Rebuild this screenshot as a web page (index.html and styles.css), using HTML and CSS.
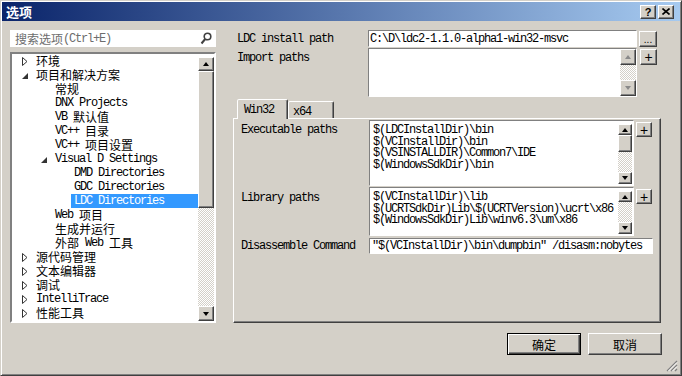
FILE: index.html
```html
<!DOCTYPE html>
<html lang="zh-CN">
<head>
  <meta charset="UTF-8">
  <title>选项</title>
  <link rel="stylesheet" href="styles.css">
</head>
<body>
  <div class="dialog">
    <!-- Title bar -->
    <div class="titlebar">
      <span class="title zh">选项</span>
      <div class="caption-btns">
        <span class="cap-btn help">?</span>
        <span class="cap-btn">
          <svg width="8" height="7" viewBox="0 0 8 7"><path d="M0.5 0.5 L7.5 6.5 M7.5 0.5 L0.5 6.5" stroke="#000" stroke-width="1.6"/></svg>
        </span>
      </div>
    </div>

    <div class="content">
      <!-- Left: search + tree -->
      <div class="left">
        <div class="search">
          <span class="zh">搜索选项</span><span>(Ctrl+E)</span>
          <svg class="search-icon" width="12" height="13" viewBox="0 0 12 13"><circle cx="7.5" cy="4.5" r="3.3" fill="none" stroke="#404040" stroke-width="1.6"/><path d="M5.2 7 L1.5 11.5" stroke="#404040" stroke-width="2"/></svg>
        </div>
        <div class="tree">
          <div class="tree-rows">
            <div class="row l0"><span class="tw"><svg width="6" height="9"><path d="M0.5 0.5 L5 4.5 L0.5 8.5 Z" fill="none" stroke="#333"/></svg></span><span class="txt"><span class="zh">环境</span></span></div>
            <div class="row l0"><span class="tw exp"><svg width="6" height="6"><path d="M6 0 L6 6 L0 6 Z" fill="#333"/></svg></span><span class="txt"><span class="zh">项目和解决方案</span></span></div>
            <div class="row l1"><span class="tw"></span><span class="txt"><span class="zh">常规</span></span></div>
            <div class="row l1"><span class="tw"></span><span class="txt">DNX Projects</span></div>
            <div class="row l1"><span class="tw"></span><span class="txt">VB <span class="zh">默认值</span></span></div>
            <div class="row l1"><span class="tw"></span><span class="txt">VC++ <span class="zh">目录</span></span></div>
            <div class="row l1"><span class="tw"></span><span class="txt">VC++ <span class="zh">项目设置</span></span></div>
            <div class="row l1"><span class="tw exp"><svg width="6" height="6"><path d="M6 0 L6 6 L0 6 Z" fill="#333"/></svg></span><span class="txt">Visual D Settings</span></div>
            <div class="row l2"><span class="tw"></span><span class="txt">DMD Directories</span></div>
            <div class="row l2"><span class="tw"></span><span class="txt">GDC Directories</span></div>
            <div class="row l2 sel"><span class="tw"></span><span class="txt">LDC Directories</span></div>
            <div class="row l1"><span class="tw"></span><span class="txt">Web <span class="zh">项目</span></span></div>
            <div class="row l1"><span class="tw"></span><span class="txt"><span class="zh">生成并运行</span></span></div>
            <div class="row l1"><span class="tw"></span><span class="txt"><span class="zh">外部</span> Web <span class="zh">工具</span></span></div>
            <div class="row l0"><span class="tw"><svg width="6" height="9"><path d="M0.5 0.5 L5 4.5 L0.5 8.5 Z" fill="none" stroke="#333"/></svg></span><span class="txt"><span class="zh">源代码管理</span></span></div>
            <div class="row l0"><span class="tw"><svg width="6" height="9"><path d="M0.5 0.5 L5 4.5 L0.5 8.5 Z" fill="none" stroke="#333"/></svg></span><span class="txt"><span class="zh">文本编辑器</span></span></div>
            <div class="row l0"><span class="tw"><svg width="6" height="9"><path d="M0.5 0.5 L5 4.5 L0.5 8.5 Z" fill="none" stroke="#333"/></svg></span><span class="txt"><span class="zh">调试</span></span></div>
            <div class="row l0"><span class="tw"><svg width="6" height="9"><path d="M0.5 0.5 L5 4.5 L0.5 8.5 Z" fill="none" stroke="#333"/></svg></span><span class="txt">IntelliTrace</span></div>
            <div class="row l0"><span class="tw"><svg width="6" height="9"><path d="M0.5 0.5 L5 4.5 L0.5 8.5 Z" fill="none" stroke="#333"/></svg></span><span class="txt"><span class="zh">性能工具</span></span></div>
          </div>
          <div class="vscroll tree-scroll">
            <span class="sb-btn sb-up"></span>
            <span class="sb-thumb"></span>
            <span class="sb-track"></span>
            <span class="sb-btn sb-down"></span>
          </div>
        </div>
      </div>

      <!-- Right: settings page -->
      <div class="right">
        <div class="field-row first">
          <span class="lbl">LDC install path</span>
          <div class="input path">C:\D\ldc2-1.1.0-alpha1-win32-msvc</div>
          <span class="btn-small dots">...</span>
        </div>
        <div class="field-row second">
          <span class="lbl">Import paths</span>
          <div class="textarea">
            <div class="list-text"></div>
            <div class="vscroll import-scroll">
              <span class="sb-btn sb-up off"></span>
              <span class="sb-track"></span>
              <span class="sb-btn sb-down off"></span>
            </div>
          </div>
          <span class="btn-small plus">+</span>
        </div>

        <div class="tabs">
          <span class="tab active">Win32</span>
          <span class="tab">x64</span>
        </div>
        <div class="panel">
          <div class="prow exec">
            <span class="lbl">Executable paths</span>
            <div class="list">
              <div class="list-text">
                <div class="line">$(LDCInstallDir)\bin</div>
                <div class="line">$(VCInstallDir)\bin</div>
                <div class="line">$(VSINSTALLDIR)\Common7\IDE</div>
                <div class="line">$(WindowsSdkDir)\bin</div>
              </div>
              <div class="vscroll list-scroll">
                <span class="sb-btn sb-up"></span>
                <span class="sb-thumb"></span>
                <span class="sb-track"></span>
                <span class="sb-btn sb-down"></span>
              </div>
            </div>
            <span class="btn-small add">+</span>
          </div>
          <div class="prow lib">
            <span class="lbl">Library paths</span>
            <div class="list">
              <div class="list-text">
                <div class="line">$(VCInstallDir)\lib</div>
                <div class="line">$(UCRTSdkDir)Lib\$(UCRTVersion)\ucrt\x86</div>
                <div class="line">$(WindowsSdkDir)Lib\winv6.3\um\x86</div>
              </div>
              <div class="vscroll list-scroll">
                <span class="sb-btn sb-up"></span>
                <span class="sb-track"></span>
                <span class="sb-btn sb-down"></span>
              </div>
            </div>
            <span class="btn-small add">+</span>
          </div>
          <div class="prow dis">
            <span class="lbl">Disassemble Command</span>
            <div class="input wide">"$(VCInstallDir)\bin\dumpbin" /disasm:nobytes</div>
          </div>
        </div>

        <div class="buttons">
          <span class="btn default zh">确定</span>
          <span class="btn zh">取消</span>
        </div>
      </div>
    </div>

    <svg class="grip" width="12" height="12" viewBox="0 0 12 12">
      <path d="M11 1 L1 11 M11 5 L5 11 M11 9 L9 11" stroke="#808080" stroke-width="1.2"/>
      <path d="M11 2.5 L2.5 11 M11 6.5 L6.5 11" stroke="#fff" stroke-width="1"/>
    </svg>
  </div>
</body>
</html>
```

FILE: styles.css
```css
/* Base */
* {
  margin: 0;
  padding: 0;
  box-sizing: border-box;
}

body {
  width: 682px;
  height: 376px;
  overflow: hidden;
  font-family: "Liberation Mono", "Noto Sans CJK SC", monospace;
  font-size: 12px;
  letter-spacing: -1.2px;
  color: #000;
  background: #d4d0c8;
}

.zh {
  font-family: "Noto Sans CJK SC", sans-serif;
  letter-spacing: 0;
}

/* Window frame */
.dialog {
  position: relative;
  width: 682px;
  height: 376px;
  border: 1px solid;
  border-color: #d4d0c8 #404040 #404040 #d4d0c8;
  box-shadow: inset 1px 1px #fff, inset -1px -1px #808080;
  padding: 1px;
  background: #d4d0c8;
}

.titlebar {
  height: 19px;
  display: flex;
  align-items: center;
  padding-left: 4px;
  background: linear-gradient(to right, #0a246a, #a6caf0);
}

.title {
  color: #fff;
  font-weight: bold;
  font-size: 13px;
  line-height: 19px;
}

.caption-btns {
  margin-left: auto;
  margin-right: 6px;
  display: flex;
  gap: 2px;
}

.cap-btn {
  width: 16px;
  height: 14px;
  display: flex;
  align-items: center;
  justify-content: center;
  background: #d4d0c8;
  border: 1px solid;
  border-color: #fff #404040 #404040 #fff;
  box-shadow: inset -1px -1px #808080;
}

.cap-btn.help {
  font: bold 11px "Liberation Sans", sans-serif;
  letter-spacing: 0;
}

/* Shared 3D bits */
.sb-btn,
.sb-thumb,
.btn-small,
.btn {
  background: #d4d0c8;
  border: 1px solid;
  border-color: #fff #404040 #404040 #fff;
  box-shadow: inset -1px -1px #808080;
}

.sb-btn {
  display: flex;
  align-items: center;
  justify-content: center;
  flex: none;
}

.sb-up::after,
.sb-down::after {
  content: '';
  border-left: 3px solid transparent;
  border-right: 3px solid transparent;
}

.sb-up::after {
  border-bottom: 4px solid #000;
}

.sb-down::after {
  border-top: 4px solid #000;
}

.sb-up.off::after {
  border-bottom-color: #8a8a8a;
}

.sb-down.off::after {
  border-top-color: #8a8a8a;
}

.sb-track {
  flex: 1;
  background: repeating-conic-gradient(#d4d0c8 0 25%, #fff 0 50%) 0 0 / 2px 2px;
}

.vscroll {
  display: flex;
  flex-direction: column;
  flex: none;
}

/* Layout */
.content {
  display: flex;
  padding: 9px 0 0 8px;
}

.left {
  width: 206px;
}

.search {
  height: 17px;
  background: #fff;
  display: flex;
  align-items: center;
  padding: 0 4px 0 5px;
  color: #6d6d6d;
  line-height: 14px;
}

.search-icon {
  margin-left: auto;
}

/* Tree */
.tree {
  margin-top: 5px;
  height: 271px;
  display: flex;
  background: #fff;
  border: 2px solid;
  border-color: #808080 #fff #fff #808080;
}

.tree-rows {
  flex: 1;
}

.row {
  height: 14px;
  display: flex;
  align-items: center;
  white-space: nowrap;
}

.row.l0 { padding-left: 8px; }
.row.l1 { padding-left: 27px; }
.row.l2 { padding-left: 46px; }

.tw {
  width: 16px;
  height: 14px;
  flex: none;
  display: flex;
  align-items: center;
  padding-left: 2px;
}

.tw.exp {
  padding-top: 2px;
}

.txt {
  height: 14px;
  line-height: 15px;
}

.txt .zh {
  display: inline-block;
  vertical-align: top;
  height: 14px;
  line-height: 14px;
}

.row.sel .txt {
  flex: 1;
  margin-left: -3px;
  padding-left: 3px;
  background: #3399ff;
  color: #fff;
}

.tree-scroll {
  width: 16px;
  margin-top: 3px;
}

.tree-scroll .sb-up { height: 14px; }
.tree-scroll .sb-thumb { height: 137px; flex: none; }
.tree-scroll .sb-down { height: 15px; }

/* Right side */
.right {
  width: 429px;
  margin-left: 17px;
}

.field-row {
  display: flex;
  align-items: flex-start;
}

.field-row .lbl {
  width: 135px;
  padding-left: 4px;
  line-height: 12px;
  white-space: nowrap;
}

.field-row.first .lbl { padding-top: 3px; }

.field-row.second {
  margin-top: 1px;
}

.field-row.second .lbl { padding-top: 4px; }

.input {
  height: 17px;
  background: #fff;
  border: 1px solid;
  border-color: #808080 #fff #fff #808080;
  padding: 2px 0 0 1px;
  line-height: 12px;
  white-space: nowrap;
  overflow: hidden;
}

.input.path {
  width: 269px;
}

.btn-small {
  display: flex;
  align-items: center;
  justify-content: center;
  letter-spacing: 0;
  font-family: "Liberation Sans", sans-serif;
}

.btn-small.dots {
  width: 18px;
  height: 16px;
  margin: 1px 0 0 2px;
  align-items: flex-end;
  font-size: 10px;
  line-height: 10px;
  padding-bottom: 1px;
}

.btn-small.plus {
  width: 17px;
  height: 16px;
  margin: 1px 0 0 3px;
  font-size: 14px;
}

.textarea {
  width: 269px;
  height: 49px;
  background: #fff;
  display: flex;
  border: 1px solid;
  border-color: #808080 #fff #fff #808080;
}

.import-scroll {
  width: 16px;
}

.import-scroll .sb-btn {
  height: 16px;
}

/* Tabs */
.tabs {
  position: relative;
  z-index: 1;
  display: flex;
  align-items: flex-end;
  height: 19px;
  margin-top: 2px;
  padding-left: 4px;
}

.tab {
  height: 17px;
  padding: 4px 0 0 4px;
  line-height: 12px;
  border: 1px solid;
  border-bottom: none;
  border-color: #fff #404040 transparent #fff;
  border-radius: 2px 2px 0 0;
  box-shadow: inset -1px 0 #808080;
  background: #d4d0c8;
  width: 46px;
}

.tab.active {
  width: 51px;
  height: 20px;
  margin-bottom: -1px;
  padding-left: 6px;
}

.panel {
  width: 428px;
  height: 205px;
  border: 1px solid;
  border-color: #fff #404040 #404040 #fff;
  box-shadow: inset -1px -1px #808080;
  padding: 1px 0 0 7px;
}

.prow {
  display: flex;
  align-items: flex-start;
}

.prow .lbl {
  width: 128px;
  line-height: 12px;
  white-space: nowrap;
}

.prow.exec .lbl { padding-top: 4px; }

.prow.lib {
  margin-top: 1px;
}

.prow.lib .lbl { padding-top: 5px; }

.prow.dis {
  margin-top: 2px;
}

.prow.dis .lbl { padding-top: 2px; }

.list {
  width: 265px;
  background: #fff;
  display: flex;
  border: 1px solid;
  border-color: #808080 #fff #fff #808080;
}

.prow.exec .list { height: 66px; }
.prow.lib .list { height: 49px; }

.list-text {
  flex: 1;
  padding: 3px 0 0 3px;
  white-space: nowrap;
  overflow: hidden;
}

.line {
  height: 11.7px;
  line-height: 12px;
}

.list-scroll {
  width: 14px;
  margin: 3px 1px 1px 0;
}

.list-scroll .sb-up { height: 11px; }
.list-scroll .sb-thumb { height: 17px; flex: none; }
.list-scroll .sb-down { height: 12px; }

.btn-small.add {
  width: 16px;
  height: 15px;
  margin: 2px 0 0 2px;
  font-size: 14px;
}

.input.wide {
  width: 284px;
  height: 16px;
  padding-top: 1px;
  padding-left: 2px;
}

/* Dialog buttons */
.buttons {
  display: flex;
  justify-content: flex-end;
  gap: 7px;
  margin-top: 10px;
}

.btn {
  width: 74px;
  height: 22px;
  display: flex;
  align-items: center;
  justify-content: center;
  font-size: 12px;
}

.btn.default {
  border-color: #000;
  box-shadow: inset 1px 1px #fff, inset -1px -1px #404040, inset -2px -2px #808080;
}

.grip {
  position: absolute;
  right: 3px;
  bottom: 3px;
}
```
